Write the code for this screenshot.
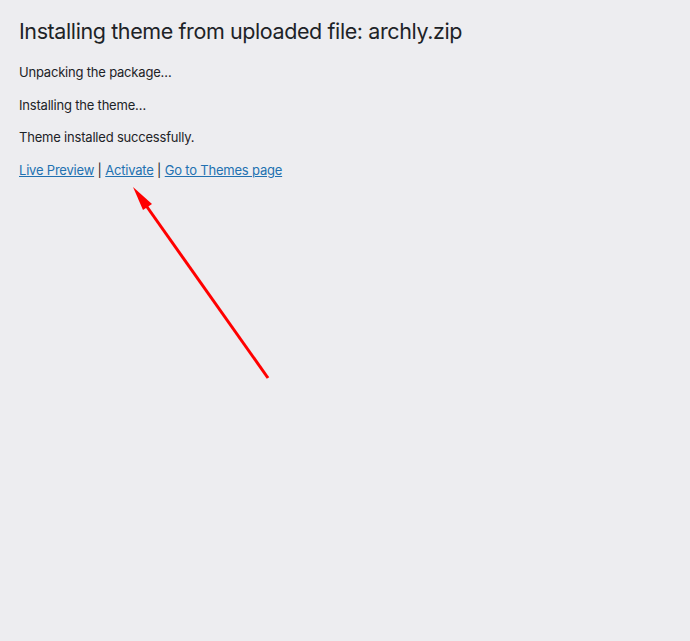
export default function App() {
  return (
    <div
      className="relative min-h-[641px] w-full bg-[#ededf0] text-[#1d2327] pl-[19px] pt-[7px]"
      style={{ fontFamily: 'Inter, "Noto Sans", sans-serif' }}
    >
      <h1 className="text-[21.5px] leading-[30px] tracking-[-0.4px] font-normal pt-[9px] pb-[4px]">
        Installing theme from uploaded file: archly.zip
      </h1>
      <div className="text-[13px] leading-[1.5] tracking-[-0.2px]">
        <p className="my-[13px]">Unpacking the package&hellip;</p>
        <p className="my-[13px]">Installing the theme&hellip;</p>
        <p className="my-[13px]">Theme installed successfully.</p>
        <p className="my-[13px]">
          <a href="#" className="text-[#2271b1] underline">Live Preview</a> |{' '}
          <a href="#" className="text-[#2271b1] underline">Activate</a> |{' '}
          <a href="#" className="text-[#2271b1] underline">Go to Themes page</a>
        </p>
      </div>

      <svg className="absolute left-0 top-0 pointer-events-none" width="690" height="641">
        <line x1="268" y1="378" x2="145" y2="204" stroke="#ff0000" strokeWidth="3" />
        <polygon points="133,187 143,210 152,204" fill="#ff0000" />
      </svg>
    </div>
  );
}
